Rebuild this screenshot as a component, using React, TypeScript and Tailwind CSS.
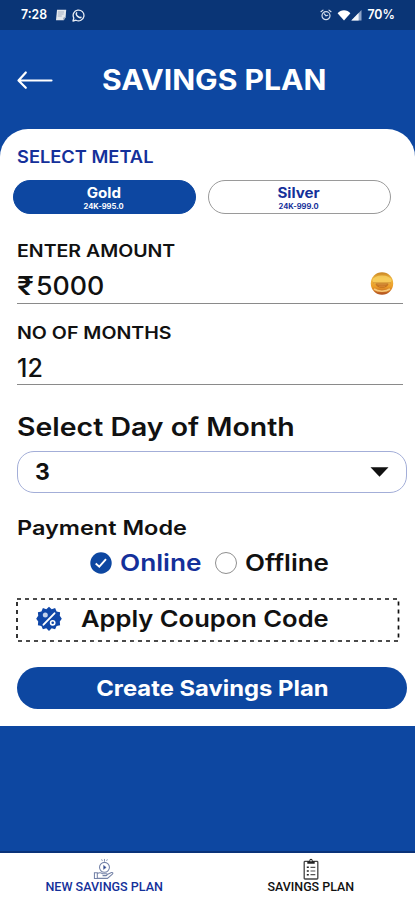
import React, { useState } from "react";

type Metal = "gold" | "silver";
type PaymentMode = "online" | "offline";

function PageIcon() {
  return (
    <svg className="h-[12px] w-[12px]" viewBox="0 0 12 12" fill="none">
      <path d="M2 .8h9.200l-.6 7.600-1.800 2.800H1z" fill="#e3e7ed" />
      <path d="M3 3h6M3 5h5.600M2.800 7h4" stroke="#98a5b8" strokeWidth="0.8" />
      <path d="M8.200 11l.4-2.400 2-.2z" fill="#6f83a4" />
    </svg>
  );
}

function WhatsAppIcon() {
  return (
    <svg className="h-[13px] w-[13px]" viewBox="0 0 13 13" fill="none">
      <path
        d="M1 12l.8-3A5.400 5.400 0 1 1 4 11.200z"
        stroke="#e8edf5"
        strokeWidth="1.300"
        strokeLinejoin="round"
      />
      <path
        d="M4.600 3.900c-.9 1 .1 2.600 1.100 3.500s2.500 1.600 3.300.8"
        stroke="#e8edf5"
        strokeWidth="1.500"
        strokeLinecap="round"
      />
    </svg>
  );
}

function AlarmIcon() {
  return (
    <svg className="h-[12px] w-[12px]" viewBox="0 0 12 12" fill="none">
      <circle cx="6" cy="6.700" r="4" stroke="#d5deec" strokeWidth="1.200" />
      <path
        d="M1 2.700L3 1.100M11 2.700L9 1.100M4.300 4.800L6 6.900l1.700-.6"
        stroke="#d5deec"
        strokeWidth="1.200"
        strokeLinecap="round"
      />
    </svg>
  );
}

function WifiIcon() {
  return (
    <svg className="h-[12px] w-[14px]" viewBox="0 0 14 12">
      <path d="M.6 4.200C2.200 2.200 4.600 1.200 7 1.200s4.800 1 6.400 3L7 11.600z" fill="#fff" />
    </svg>
  );
}

function SignalIcon() {
  return (
    <svg className="h-[12px] w-[11px]" viewBox="0 0 11 12">
      <path d="M.3 11.500L10.500 1v10.500z" fill="#8fa5c8" />
      <path d="M.3 11.500L7.600 4v7.500z" fill="#f4f7fb" />
    </svg>
  );
}

function BackArrow() {
  return (
    <svg className="h-[20px] w-[37px]" viewBox="0 0 37 20" fill="none">
      <path
        d="M35.500 10.500H3M9.800 2.500L2.500 10.500L9.800 17.800"
        stroke="#fff"
        strokeWidth="2.200"
        strokeLinecap="round"
        strokeLinejoin="round"
      />
    </svg>
  );
}

function CoinIcon() {
  return (
    <svg className="h-[23px] w-[24px]" viewBox="0 0 24 23">
      <defs>
        <linearGradient id="coin" x1="0" y1="0" x2="0" y2="1">
          <stop offset="0" stopColor="#c98524" />
          <stop offset="0.3" stopColor="#f0b840" />
          <stop offset="0.65" stopColor="#eb9c28" />
          <stop offset="1" stopColor="#b04f1f" />
        </linearGradient>
      </defs>
      <circle cx="12" cy="11.500" r="11.200" fill="url(#coin)" />
      <ellipse cx="12" cy="8.500" rx="9.500" ry="5" fill="#fbd566" opacity="0.7" />
      <path d="M5.500 11.300h13c0 2.700-2.500 4.500-6.500 4.500s-6.500-1.800-6.500-4.500z" fill="#b4601c" opacity="0.7" />
      <path d="M3 10.800h18" stroke="#c47a25" strokeWidth="0.900" opacity="0.7" />
      <path d="M7.500 12.800h9M9 14.300h6" stroke="#e0943a" strokeWidth="0.700" />
      <path d="M4 17c4 3 12 3 16 0" stroke="#f7c878" strokeWidth="1.600" fill="none" />
    </svg>
  );
}

function CouponIcon() {
  return (
    <svg className="h-[26px] w-[26px]" viewBox="0 0 26 26" fill="none">
      <path
        d="M13 .8l2.700 2.400 3.400-1.100 1.500 3.300 3.500.8-.3 3.600 2 2.900-2 2.900.3 3.600-3.500.8-1.500 3.300-3.400-1.100L13 25l-2.700-2.800-3.400 1.100-1.500-3.300-3.500-.8.3-3.600-2-2.900 2-2.900-.3-3.600 3.500-.8 1.500-3.300 3.400 1.100z"
        fill="#1047a8"
      />
      <path d="M18.500 7.300l-11 11.400" stroke="#fff" strokeWidth="1.900" strokeLinecap="round" />
      <circle cx="9.300" cy="9" r="2.500" fill="#c3d2ec" />
      <circle cx="16.700" cy="16.800" r="2.100" stroke="#fff" strokeWidth="1.600" />
    </svg>
  );
}

function HandCoinIcon() {
  return (
    <svg className="h-[22px] w-[22px]" viewBox="0 0 22 23" fill="none" stroke="#7583a8" strokeWidth="1.100">
      <circle cx="11.500" cy="9.800" r="5.200" />
      <path d="M10.500 7.700v4.200l2.800-2z" fill="#24418f" strokeWidth="0.600" />
      <path d="M11.500 3.800V1M9.300 3l-.8-1.600M13.700 3l.8-1.600" strokeWidth="0.900" />
      <path d="M1 15.500h3v6H1zM4 16.200c2-1.200 4-1 5.500.3h3.800c1.200 0 1.200 1.900 0 1.900H9.500M13.800 17.600l5-2.400c1.300-.4 2 .8 1 1.600l-5.200 4.500H4" />
    </svg>
  );
}

function ClipboardIcon() {
  return (
    <svg className="h-[22px] w-[16px]" viewBox="0 0 16 22" fill="none">
      <rect x="1.200" y="3.400" width="13.600" height="17.600" rx="0.800" stroke="#444" strokeWidth="1.300" />
      <path d="M4.300 5.800V3.200h2C6.500 1.400 7 .7 8 .7s1.500.7 1.700 2.500h2v2.600z" fill="#222" />
      <circle cx="8" cy="2.700" r="0.800" fill="#fff" />
      <path d="M3.800 9.300h2M3.800 13h2M3.800 16.700h2" stroke="#222" strokeWidth="1.600" />
      <path d="M7.500 9.300h4.800M7.500 13h4.800M7.500 16.700h4.800" stroke="#555" strokeWidth="1.200" />
    </svg>
  );
}

function StatusBar() {
  return (
    <div className="flex h-[30px] items-center justify-between bg-[#0a3576] pr-[20px] pl-[21px] text-[13px] font-semibold text-white">
      <div className="flex items-center">
        <span className="w-[34px] origin-left scale-x-[0.94]">7:28</span>
        <PageIcon />
        <span className="w-[5px]" />
        <WhatsAppIcon />
      </div>
      <div className="flex items-center">
        <AlarmIcon />
        <span className="w-[5px]" />
        <WifiIcon />
        <SignalIcon />
        <span className="ml-[4px] origin-right scale-x-[0.95]">70%</span>
      </div>
    </div>
  );
}

interface MetalButtonProps {
  name: string;
  purity: string;
  active: boolean;
  onClick: () => void;
}

function MetalButton({ name, purity, active, onClick }: MetalButtonProps) {
  return (
    <button
      onClick={onClick}
      className={`flex h-[34px] w-[183px] flex-col items-center rounded-full border pt-[5px] ${
        active ? "border-[#0d47a1] bg-[#0d47a1] text-white" : "border-[#9a9a9a] bg-white text-[#14309a]"
      }`}
    >
      <span className="-ml-[2px] scale-x-[1.08] text-[14px] leading-[14px] font-bold">{name}</span>
      <span className="-ml-[2px] mt-[2px] scale-x-[1.08] text-[7px] leading-[9px] font-bold">{purity}</span>
    </button>
  );
}

export default function App() {
  const [metal, setMetal] = useState<Metal>("gold");
  const [mode, setMode] = useState<PaymentMode>("online");

  return (
    <div className="flex h-[900px] w-[415px] flex-col overflow-hidden bg-[#0d47a1] font-[Inter,sans-serif] whitespace-nowrap text-[#111]">
      <StatusBar />

      {/* Header */}
      <div className="flex h-[99px] items-center pt-px pl-[16px]">
        <BackArrow />
        <h1 className="ml-[49px] origin-left scale-x-[1.074] text-[28px] leading-none font-bold text-white">
          SAVINGS PLAN
        </h1>
      </div>

      {/* Form card */}
      <div className="flex h-[597px] flex-col rounded-t-[28px] bg-white pt-[16px]">
        <div className="ml-[17px] h-[24px] origin-left scale-x-[1.075] text-[17px] leading-[24px] font-semibold text-[#14309a]">
          SELECT METAL
        </div>
        <div className="mt-[11px] ml-[13px] flex gap-[12px]">
          <MetalButton
            name="Gold"
            purity="24K-995.0"
            active={metal === "gold"}
            onClick={() => setMetal("gold")}
          />
          <MetalButton
            name="Silver"
            purity="24K-999.0"
            active={metal === "silver"}
            onClick={() => setMetal("silver")}
          />
        </div>

        <div className="mt-[27px] ml-[17px] h-[20px] origin-left scale-x-[1.148] text-[17px] leading-[20px] font-semibold">
          ENTER AMOUNT
        </div>
        <div className="mt-[8px] mr-[12px] ml-[17px] flex h-[35px] items-center border-b border-[#8a8a8a] pt-px text-[25px] leading-none font-medium">
          <span className="w-[19px] origin-left scale-x-[1.2] font-semibold">₹</span>
          <span className="origin-left scale-x-[1.07]">5000</span>
          <span className="mr-[9px] mb-[6px] ml-auto">
            <CoinIcon />
          </span>
        </div>

        <div className="mt-[19px] ml-[17px] h-[20px] origin-left scale-x-[1.152] text-[17px] leading-[20px] font-semibold">
          NO OF MONTHS
        </div>
        <div className="mt-[9px] mr-[12px] ml-[17px] flex h-[33px] items-center border-b border-[#8a8a8a] pt-px text-[25px] leading-none font-medium">
          <span className="origin-left scale-x-[1]">12</span>
        </div>

        <div className="mt-[28px] ml-[17px] h-[28px] origin-left scale-x-[1.138] text-[25px] leading-[28px] font-semibold">
          Select Day of Month
        </div>
        <div className="mt-[10px] mr-[8px] ml-[17px] flex h-[42px] items-center justify-between rounded-[17px] border border-[#a3aed8] pr-[17px] pl-[17px]">
          <span className="text-[23px] leading-none font-bold">3</span>
          <svg className="h-[10px] w-[19px]" viewBox="0 0 19 10">
            <path d="M.5 .3h18L9.500 9.700z" fill="#111" />
          </svg>
        </div>

        <div className="mt-[25px] ml-[17px] h-[20px] origin-left scale-x-[1.174] text-[20px] leading-[20px] font-semibold">
          Payment Mode
        </div>
        <div className="mt-[13px] ml-[90px] flex h-[24px] items-center text-[23px] leading-none font-semibold">
          <button onClick={() => setMode("online")} className="flex w-[125px] items-center text-[#14309a]">
            <svg className="h-[22px] w-[22px]" viewBox="0 0 22 22" fill="none">
              <circle cx="11" cy="11" r="10.700" fill="#0d47a1" />
              {mode === "online" && <path d="M5.700 11.500l3.600 3.200 6.700-7.500" stroke="#fff" strokeWidth="1.900" />}
            </svg>
            <span className="ml-[8px] origin-left scale-x-[1.14]">Online</span>
          </button>
          <button onClick={() => setMode("offline")} className="flex items-center">
            <span className="h-[22px] w-[22px] rounded-full border border-[#8f8f8f]" />
            <span className="ml-[8px] origin-left scale-x-[1.13]">Offline</span>
          </button>
        </div>

        {/* Coupon */}
        <div className="relative mt-[23px] mr-[15px] ml-[16px] flex h-[44px] items-center pb-[2px] pl-[20px]">
          <svg className="absolute inset-0 h-[44px] w-[384px]" viewBox="0 0 384 44" fill="none">
            <rect x="1" y="1" width="381.500" height="42" stroke="#111" strokeWidth="1.700" strokeDasharray="4 4" />
          </svg>
          <CouponIcon />
          <span className="ml-[19px] origin-left scale-x-[1.11] text-[23px] leading-none font-semibold">
            Apply Coupon Code
          </span>
        </div>

        <button className="mt-[25px] mr-[8px] ml-[17px] flex h-[42px] items-center justify-center rounded-full bg-[#0d47a1] text-white">
          <span className="scale-x-[1.082] text-[22px] leading-none font-bold">Create Savings Plan</span>
        </button>
      </div>

      {/* Bottom navigation */}
      <div className="mt-auto grid h-[49px] grid-cols-2 border-t-2 border-[#0a3279] bg-white font-[Roboto,sans-serif] text-[12px] leading-[14px] font-medium">
        <div className="flex flex-col items-center pt-[5px] text-[#14309a]">
          <HandCoinIcon />
          <span className="scale-x-[1.045]">NEW SAVINGS PLAN</span>
        </div>
        <div className="flex flex-col items-center pt-[5px]">
          <ClipboardIcon />
          <span className="scale-x-[1.035]">SAVINGS PLAN</span>
        </div>
      </div>
    </div>
  );
}
